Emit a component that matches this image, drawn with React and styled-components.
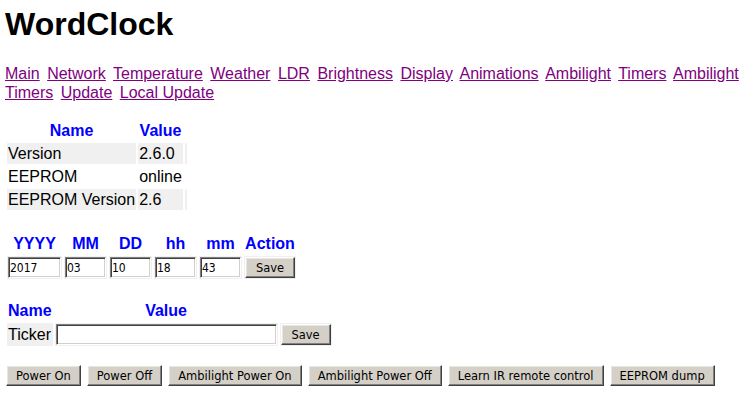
import { Fragment } from 'react';
import styled, { createGlobalStyle } from 'styled-components';

const GlobalStyle = createGlobalStyle`
  body {
    margin: 0;
    padding: 6px 0 6px 5px;
    background: #ffffff;
    color: #000000;
    font-family: "Liberation Sans", Arial, sans-serif;
    font-size: 16px;
  }
`;

const Title = styled.h1`
  margin: 0 0 22px;
  font-size: 32px;
  line-height: 36px;
  font-weight: bold;
`;

const Nav = styled.div`
  line-height: 19px;
  margin-bottom: 16px;
`;

const NavLink = styled.a`
  color: #800080;
  text-decoration: underline;
  margin-right: 3px;
`;

const Table = styled.table`
  border-collapse: separate;
  border-spacing: 2px;
  margin-bottom: ${(p) => p.$gap || 0}px;
`;

const Head = styled.th`
  color: #0000ff;
  font-weight: bold;
  padding: 1px;
  line-height: 19px;
  text-align: center;
`;

const Cell = styled.td`
  padding: 1px;
  line-height: 19px;
  background: ${(p) => (p.$shade ? '#f0f0f0' : 'transparent')};
  white-space: nowrap;
`;

const Field = styled.input`
  box-sizing: border-box;
  width: ${(p) => p.$w}px;
  height: 21px;
  margin: 0;
  padding: 0 1px;
  display: block;
  font-family: "DejaVu Sans Condensed", "DejaVu Sans", Tahoma, sans-serif;
  font-size: 12px;
  color: #000;
  background: #fff;
  border: 1px solid;
  border-color: #808080 #ffffff #ffffff #808080;
  box-shadow: inset 1px 1px #404040, inset -1px -1px #d4d0c8;
  outline: none;
`;

const Button = styled.button`
  height: 21px;
  margin: 0;
  padding: 0 9px;
  display: block;
  font-family: "DejaVu Sans", Tahoma, sans-serif;
  font-size: 11.5px;
  color: #000;
  background: #d4d0c8;
  border: 1px solid;
  border-color: #ffffff #404040 #404040 #ffffff;
  box-shadow: inset -1px -1px #808080, inset 1px 1px #e8e6e1;
  cursor: pointer;
  width: ${(p) => (p.$w ? `${p.$w}px` : 'auto')};
`;

const ButtonBar = styled.div`
  display: flex;
  gap: 6px;
  padding-left: 1px;
`;

const links = [
  'Main', 'Network', 'Temperature', 'Weather', 'LDR', 'Brightness', 'Display',
  'Animations', 'Ambilight', 'Timers', 'Ambilight Timers', 'Update', 'Local Update',
];

const info = [
  ['Version', '2.6.0'],
  ['EEPROM', 'online'],
  ['EEPROM Version', '2.6'],
];

const dateFields = [
  ['YYYY', '2017', 53],
  ['MM', '03', 41],
  ['DD', '10', 41],
  ['hh', '18', 41],
  ['mm', '43', 41],
];

const actions = [
  'Power On', 'Power Off', 'Ambilight Power On', 'Ambilight Power Off',
  'Learn IR remote control', 'EEPROM dump',
];

export default function App() {
  return (
    <>
      <GlobalStyle />
      <Title>WordClock</Title>
      <Nav>
        {links.map((l) => (
          <Fragment key={l}>
            <NavLink href="#">{l}</NavLink>{' '}
          </Fragment>
        ))}
      </Nav>

      <Table $gap={19}>
        <thead>
          <tr>
            <Head>Name</Head>
            <Head>Value</Head>
            <Head />
          </tr>
        </thead>
        <tbody>
          {info.map(([name, value], i) => (
            <tr key={name}>
              <Cell $shade={i % 2 === 0}>{name}</Cell>
              <Cell $shade={i % 2 === 0}>{value}</Cell>
              <Cell $shade={i % 2 === 0} />
            </tr>
          ))}
        </tbody>
      </Table>

      <Table $gap={17}>
        <thead>
          <tr>
            {dateFields.map(([h]) => (
              <Head key={h}>{h}</Head>
            ))}
            <Head>Action</Head>
          </tr>
        </thead>
        <tbody>
          <tr>
            {dateFields.map(([h, v, w]) => (
              <Cell key={h} $shade>
                <Field $w={w} defaultValue={v} />
              </Cell>
            ))}
            <Cell $shade>
              <Button $w={50}>Save</Button>
            </Cell>
          </tr>
        </tbody>
      </Table>

      <Table $gap={17}>
        <thead>
          <tr>
            <Head>Name</Head>
            <Head>Value</Head>
            <Head />
          </tr>
        </thead>
        <tbody>
          <tr>
            <Cell $shade>Ticker</Cell>
            <Cell $shade>
              <Field $w={221} defaultValue="" />
            </Cell>
            <Cell $shade>
              <Button $w={50}>Save</Button>
            </Cell>
          </tr>
        </tbody>
      </Table>

      <ButtonBar>
        {actions.map((a) => (
          <Button key={a}>{a}</Button>
        ))}
      </ButtonBar>
    </>
  );
}
